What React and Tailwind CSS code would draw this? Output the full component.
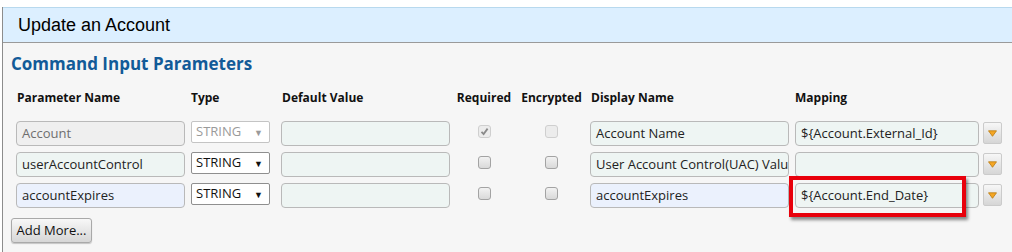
import React from "react";

const inputBase =
  "h-[25px] rounded-[4px] border border-[#b9b9b9] px-[5px] flex items-center text-[13px] overflow-hidden whitespace-nowrap";

function Input({ w, bg = "bg-[#eef5f3]", color = "text-[#222]", children }) {
  return (
    <div className={`${inputBase} ${w} ${bg} ${color}`}>{children}</div>
  );
}

function Select({ disabled }) {
  return (
    <div
      className={`ml-[6px] w-[79px] h-[22px] border ${
        disabled ? "border-[#c4c4c4] text-[#9a9a9a]" : "border-[#8f8f8f] text-[#111]"
      } bg-white flex items-center justify-between pl-[4px] pr-[6px] text-[13px] rounded-[2px]`}
    >
      <span>STRING</span>
      <span className="text-[9px] leading-none">▼</span>
    </div>
  );
}

function Checkbox({ checked, disabled }) {
  return (
    <div
      className={`w-[13px] h-[13px] rounded-[3px] border ${
        disabled ? "border-[#cfcfcf] bg-[#ececec]" : "border-[#a3a3a3] bg-gradient-to-b from-[#f2f2f2] to-[#d9d9d9]"
      } flex items-center justify-center`}
    >
      {checked && (
        <svg width="9" height="9" viewBox="0 0 9 9">
          <path d="M1.5 4.8 L3.6 7 L7.6 1.6" stroke="#8a8a8a" strokeWidth="1.8" fill="none" />
        </svg>
      )}
    </div>
  );
}

function DropBtn() {
  return (
    <div className="ml-[4px] mt-[1px] w-[19px] h-[22px] rounded-[2px] border border-[#cbcbcb] bg-gradient-to-b from-[#f7f7f7] to-[#d6d6d6] flex items-center justify-center">
      <svg width="9" height="7" viewBox="0 0 9 7">
        <path d="M0.5 0.8 L8.5 0.8 L4.5 6.3 Z" fill="#f5a623" stroke="#b97a10" strokeWidth="0.8" />
      </svg>
    </div>
  );
}

function Row({ name, nameBg, nameColor, disabled, display, displayBg, mapping, checked }) {
  return (
    <div className="flex items-start h-[31px]">
      <Input w="w-[169px]" bg={nameBg} color={nameColor}>
        {name}
      </Input>
      <Select disabled={disabled} />
      <div className="ml-[11px]">
        <Input w="w-[169px]" />
      </div>
      <div className="w-[68px] flex justify-center pt-[4px]">
        <Checkbox checked={checked} disabled={disabled} />
      </div>
      <div className="w-[67px] flex justify-center pt-[4px]">
        <Checkbox disabled={disabled} />
      </div>
      <div className="ml-[5px]">
        <Input w="w-[199px]" bg={displayBg}>
          {display}
        </Input>
      </div>
      <div className="ml-[6px]">
        <Input w="w-[184px]">{mapping}</Input>
      </div>
      <DropBtn />
    </div>
  );
}

export default function App() {
  return (
    <div
      className="w-[1012px] h-[252px] bg-white overflow-hidden"
      style={{ fontFamily: '"Open Sans", "Noto Sans", sans-serif' }}
    >
      <div className="h-[7px] bg-white" />
      <div className="ml-[2px] h-[245px] border-l border-[#8c8c8c] bg-[#f6f6f6] flex flex-col">
        <div className="h-[36px] border-t border-[#b8d9ee] border-b border-b-[#9a9a9a] bg-[#dcefff] flex items-center pl-[15px]">
          <span
            className="text-[18px] text-black leading-none"
            style={{ fontFamily: '"Liberation Sans", Arial, sans-serif' }}
          >
            Update an Account
          </span>
        </div>
        <div className="relative pl-[8px]">
          <div className="pt-[9px] h-[41px] text-[17px] font-bold text-[#125b98] leading-[24px]">
            Command Input Parameters
          </div>
          <div className="pl-[5px]">
            <div className="flex items-center h-[28px] text-[12px] font-bold text-[#111]">
              <div className="w-[169px] pl-[1px]">Parameter Name</div>
              <div className="ml-[6px] w-[79px]">Type</div>
              <div className="ml-[11px] w-[169px] pl-[1px]">Default Value</div>
              <div className="w-[68px] text-center">Required</div>
              <div className="w-[67px] text-center">Encrypted</div>
              <div className="ml-[5px] w-[199px] pl-[1px]">Display Name</div>
              <div className="ml-[6px] w-[184px]">Mapping</div>
            </div>
            <div className="pt-[9px]">
              <Row
                name="Account"
                nameBg="bg-[#efefef]"
                nameColor="text-[#6e6e6e]"
                disabled
                checked
                display="Account Name"
                displayBg="bg-[#eef5f3]"
                mapping="${Account.External_Id}"
              />
              <Row
                name="userAccountControl"
                nameBg="bg-[#eef5f3]"
                nameColor="text-[#222]"
                display="User Account Control(UAC) Value"
                displayBg="bg-[#eef5f3]"
                mapping=""
              />
              <Row
                name="accountExpires"
                nameBg="bg-[#ebf1fd]"
                nameColor="text-[#222]"
                display="accountExpires"
                displayBg="bg-[#ebf1fd]"
                mapping="${Account.End_Date}"
              />
            </div>
          </div>
          <div className="mt-[4px]">
            <button className="h-[25px] w-[81px] rounded-[3px] border border-[#a9a9a9] bg-gradient-to-b from-[#f8f8f8] to-[#d6d6d6] text-[13px] text-[#111] shadow-[0_1px_1px_rgba(0,0,0,0.2)] flex items-center justify-center">
              Add More...
            </button>
          </div>
          <div className="absolute left-[786px] top-[133px] w-[177px] h-[41px] border-[4px] border-[#e8000b] shadow-[2px_3px_3px_rgba(0,0,0,0.45)]" />
        </div>
      </div>
    </div>
  );
}
